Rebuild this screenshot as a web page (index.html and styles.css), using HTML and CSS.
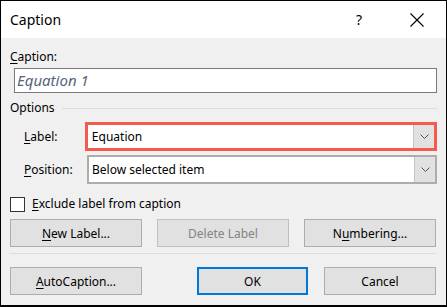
FILE: index.html
```html
<!DOCTYPE html>
<html lang="en">
<head>
    <meta charset="UTF-8">
    <title>Caption</title>
    <link rel="stylesheet" href="styles.css">
</head>
<body>
    <div class="dialog">
        <!-- Title bar -->
        <div class="titlebar">
            <span class="title">Caption</span>
            <span class="help">?</span>
            <span class="close">
                <svg width="14" height="14" viewBox="0 0 14 14">
                    <path d="M0.5 0.5 L13.5 13.5 M13.5 0.5 L0.5 13.5" stroke="#000" stroke-width="1.1" fill="none"/>
                </svg>
            </span>
        </div>

        <div class="content">
            <div class="caption-label"><u>C</u>aption:</div>
            <div class="caption-input">Equation 1</div>

            <div class="group-head">
                <span>Options</span>
                <span class="group-line"></span>
            </div>

            <div class="option-row first-row">
                <span class="row-label"><u>L</u>abel:</span>
                <div class="select select-highlight">
                    <span class="select-text">Equation</span>
                    <span class="select-btn">
                        <svg width="9" height="5" viewBox="0 0 9 5"><path d="M0.5 0.5 L4.5 4.5 L8.5 0.5" stroke="#555" fill="none"/></svg>
                    </span>
                </div>
            </div>

            <div class="option-row">
                <span class="row-label"><u>P</u>osition:</span>
                <div class="select">
                    <span class="select-text">Below selected item</span>
                    <span class="select-btn">
                        <svg width="9" height="5" viewBox="0 0 9 5"><path d="M0.5 0.5 L4.5 4.5 L8.5 0.5" stroke="#555" fill="none"/></svg>
                    </span>
                </div>
            </div>

            <div class="check-row">
                <span class="checkbox"></span>
                <span><u>E</u>xclude label from caption</span>
            </div>

            <div class="btn-row">
                <button class="btn"><u>N</u>ew Label...</button>
                <button class="btn" disabled>Delete Label</button>
                <button class="btn">N<u>u</u>mbering...</button>
            </div>

            <div class="separator"></div>

            <div class="bottom-row">
                <button class="btn"><u>A</u>utoCaption...</button>
                <button class="btn btn-default">OK</button>
                <button class="btn btn-cancel">Cancel</button>
            </div>
        </div>
    </div>
</body>
</html>
```

FILE: styles.css
```css
body {
    margin: 0;
    background-color: #ffffff;
    font-family: 'Noto Sans', 'Liberation Sans', sans-serif;
    font-size: 12px;
    color: #000;
}

.dialog {
    width: 447px;
    height: 307px;
    box-sizing: border-box;
    border: 1px solid #000;
    border-bottom-width: 2px;
    background-color: #f0f0f0;
}

/* Title bar */
.titlebar {
    height: 37px;
    background-color: #ffffff;
    display: flex;
    align-items: center;
    padding-left: 9px;
}

.title {
    font-size: 14px;
    flex: 1;
}

.help {
    font-size: 14px;
    width: 54px;
}

.close {
    width: 36px;
    display: flex;
}

/* Content */
.content {
    padding: 10px 9px 0 9px;
}

u {
    text-decoration-thickness: 1px;
    text-underline-offset: 2px;
}

.caption-label {
    line-height: 18px;
}

.caption-input {
    margin: 2px 0 0 4px;
    height: 25px;
    box-sizing: border-box;
    border: 1px solid #7a7a7a;
    background-color: #ffffff;
    padding-left: 2px;
    line-height: 23px;
    font-size: 15px;
    font-style: italic;
    color: #56657a;
}

.group-head {
    display: flex;
    align-items: center;
    margin-top: 6px;
    line-height: 18px;
}

.group-line {
    flex: 1;
    height: 1px;
    background-color: #dcdcdc;
    margin-left: 7px;
}

.option-row {
    display: flex;
    align-items: center;
    padding-left: 14px;
    margin-top: 4px;
}

.first-row {
    margin-top: 5px;
}

.row-label {
    width: 63px;
}

.select {
    width: 350px;
    height: 29px;
    box-sizing: border-box;
    border: 2px solid #adadad;
    background-color: #ffffff;
    display: flex;
    align-items: stretch;
}

.select-highlight {
    width: 353px;
    margin-left: -2px;
    border: 3px solid #f45a4e;
}

.select-text {
    flex: 1;
    padding-left: 3px;
    display: flex;
    align-items: center;
}

.select-btn {
    width: 20px;
    background-color: #e1e1e1;
    border-left: 1px solid #c4c4c4;
    display: flex;
    align-items: center;
    justify-content: center;
}

.select-highlight .select-text {
    padding-left: 4px;
}

.check-row {
    display: flex;
    align-items: center;
    margin-top: 11px;
    line-height: 18px;
}

.checkbox {
    width: 15px;
    height: 15px;
    box-sizing: border-box;
    border: 1px solid #333;
    background-color: #ffffff;
    margin-right: 7px;
}

.btn-row {
    display: grid;
    grid-template-columns: 132px 132px 132px;
    gap: 15px;
    margin-top: 6px;
}

.btn {
    height: 28px;
    box-sizing: border-box;
    border: 1px solid #adadad;
    background-color: #e1e1e1;
    font-family: inherit;
    font-size: 12px;
    color: #000;
    padding: 0;
}

.btn:disabled {
    color: #838383;
    border-color: #bfbfbf;
}

.separator {
    height: 1px;
    background-color: #dcdcdc;
    margin: 6px 1px 0 0;
}

.bottom-row {
    display: flex;
    margin-top: 13px;
}

.bottom-row .btn {
    width: 132px;
}

.bottom-row .btn-default {
    width: 111px;
    margin-left: 55px;
    border: 2px solid #0078d7;
}

.bottom-row .btn-cancel {
    width: 112px;
    margin-left: 16px;
}
```
